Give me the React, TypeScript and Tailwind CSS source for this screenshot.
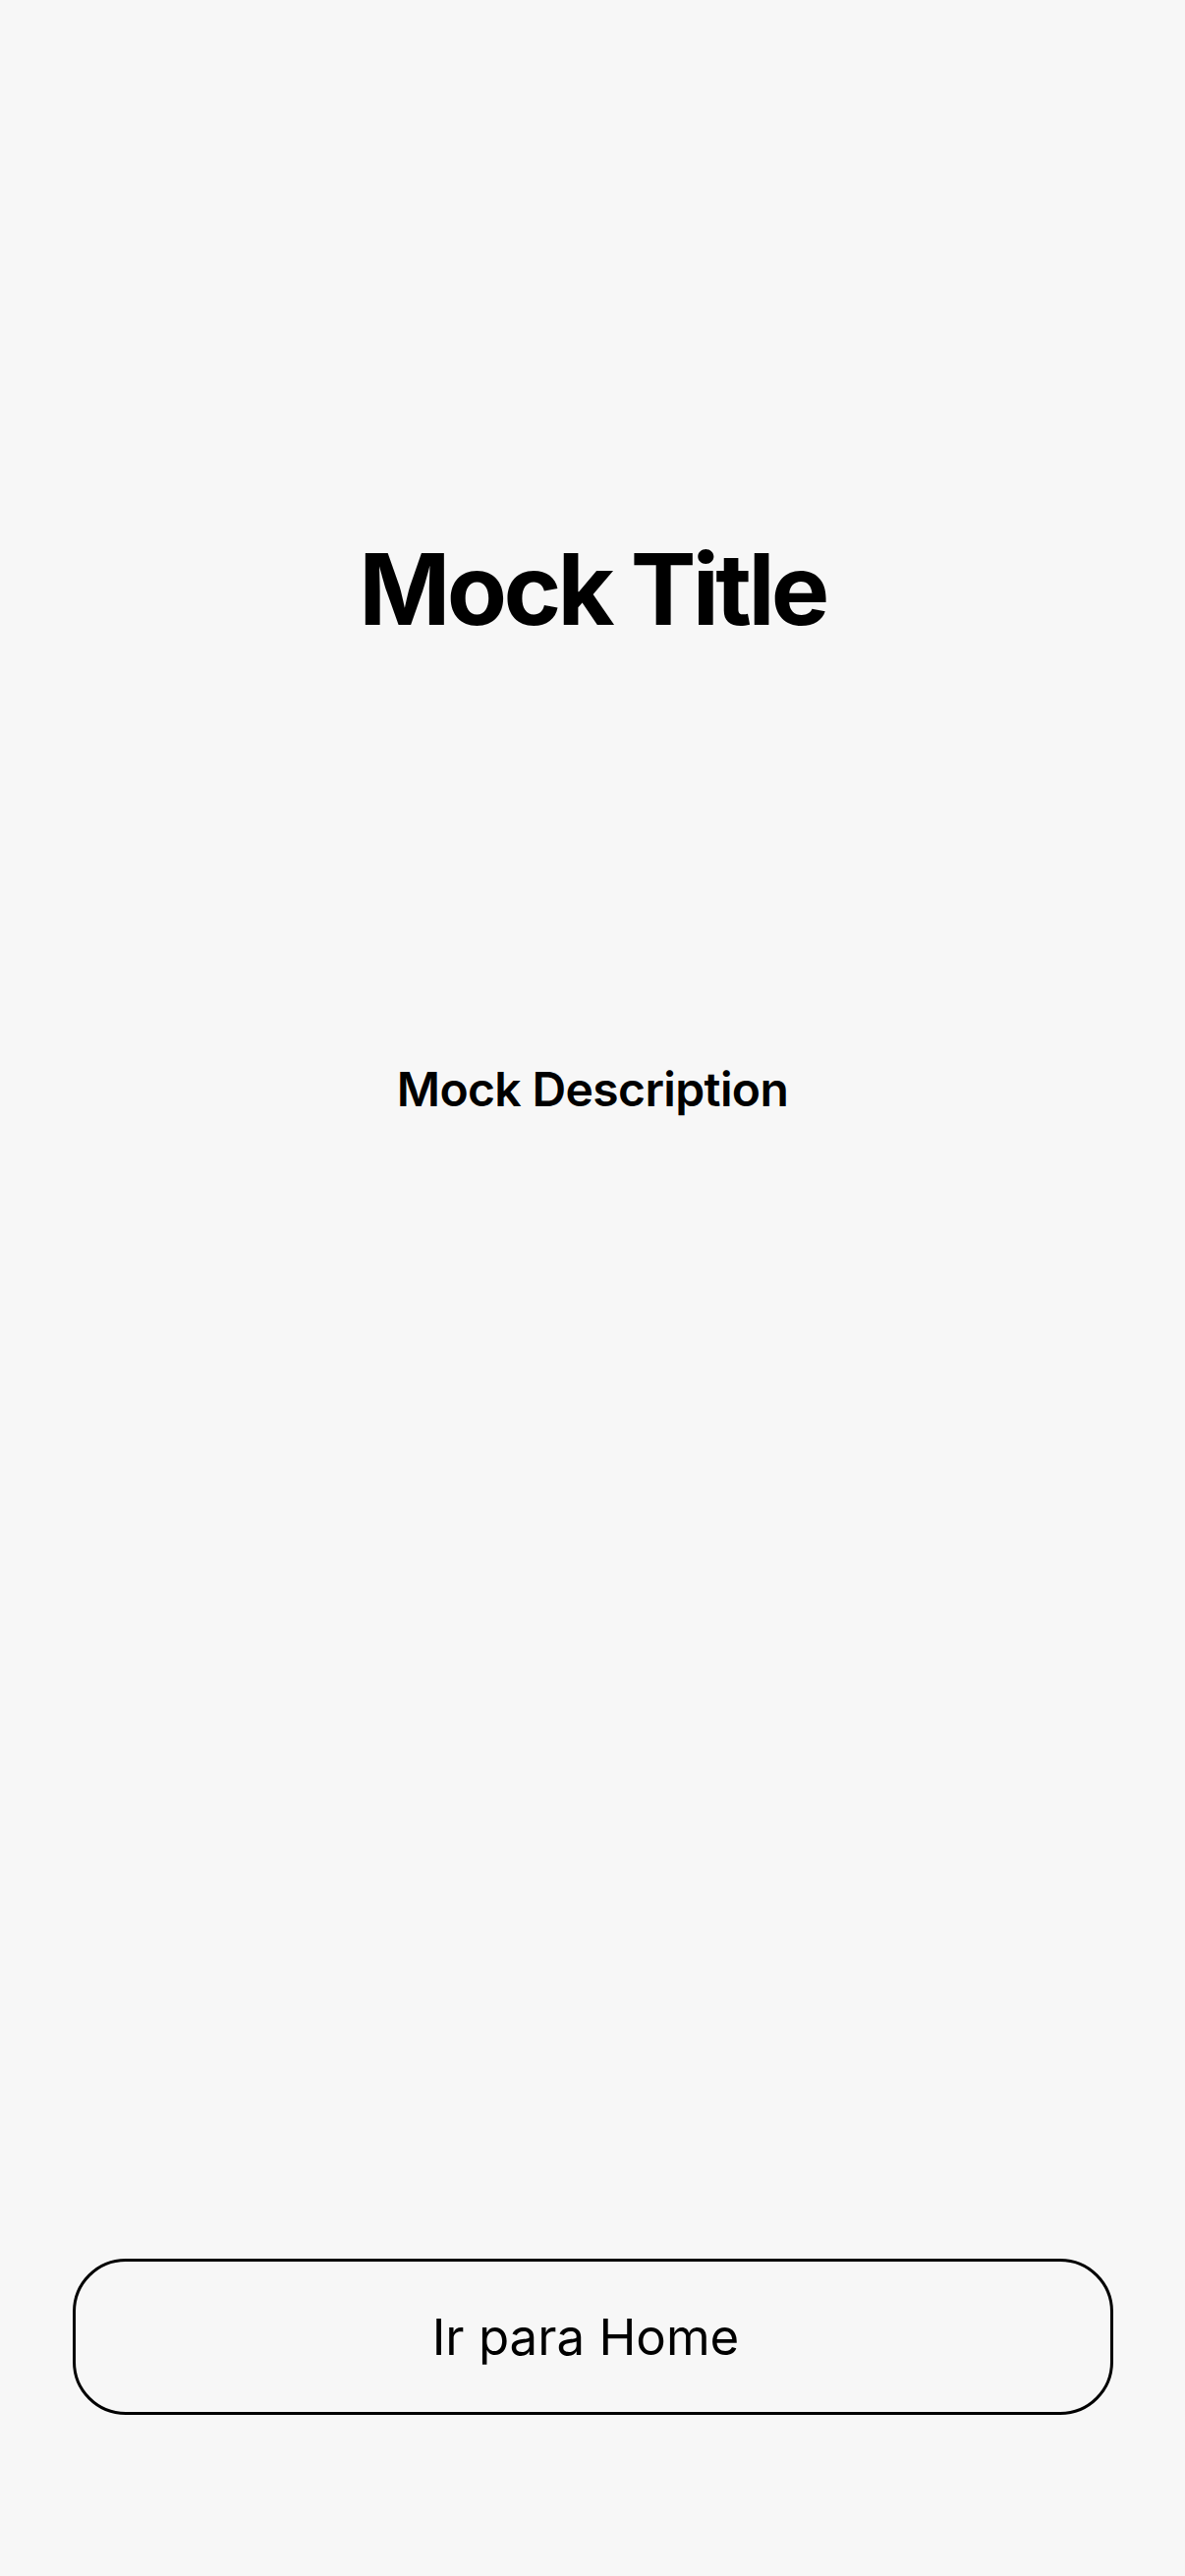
export default function App() {
  return (
    <div className="min-h-screen bg-[#f7f7f7] flex flex-col items-center font-['Inter',sans-serif] text-black">
      {/* Cabeçalho */}
      <h1 className="mt-[539px] text-[100px] leading-[1.21] font-bold tracking-[-0.037em]">Mock Title</h1>

      <p className="mt-[420px] text-[48px] leading-[1.21] font-semibold tracking-[-0.013em]">Mock Description</p>

      <div className="flex-1" />

      <button className="mb-[164px] w-[1059px] h-[159px] border-[3px] border-black rounded-[54px] flex items-center justify-center pr-[14px] text-[51px] leading-[1.21] font-normal">
        Ir para Home
      </button>
    </div>
  );
}
